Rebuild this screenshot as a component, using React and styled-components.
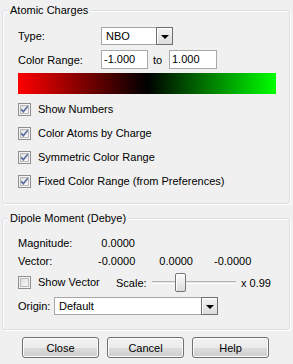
import React from 'react'
import styled, { createGlobalStyle } from 'styled-components'

const GlobalStyle = createGlobalStyle`
    html, body {
        margin: 0;
        padding: 0;
        background: #f0f0f0;
    }
    body {
        font-family: "Liberation Sans", Arial, sans-serif;
        font-size: 11px;
        color: #000;
    }
`

const Dialog = styled.div`
    width: 293px;
    height: 364px;
    box-sizing: border-box;
    padding: 3px 0 0 2px;
    display: flex;
    flex-direction: column;
`

const Group = styled.fieldset`
    margin: ${p => p.$top || 0}px 0 0 0;
    padding: 0;
    min-width: 0;
    width: 288px;
    box-sizing: border-box;
    border: 1px solid #d5dfe5;
    border-radius: 3px;
    box-shadow: inset 1px 1px 0 #fff, 1px 1px 0 #fff;
`

const Legend = styled.legend`
    margin-left: 5px;
    padding: 0 2px;
    line-height: 14px;
    height: 14px;
    background: #f0f0f0;
`

const GroupBody = styled.div`
    display: flex;
    flex-direction: column;
    padding: ${p => p.$top}px 0 ${p => p.$bottom}px 15px;
`

const Row = styled.div`
    display: flex;
    align-items: center;
    height: ${p => p.$h}px;
    margin-top: ${p => p.$mt || 0}px;
`

const Label = styled.span`
    width: ${p => p.$w}px;
    flex: none;
    white-space: nowrap;
`

const Combo = styled.div`
    display: flex;
    width: ${p => p.$w}px;
    height: 18px;
    box-sizing: border-box;
`

const ComboField = styled.div`
    flex: 1;
    background: #fff;
    border: 1px solid #a7a7a7;
    border-right: none;
    padding-left: 4px;
    line-height: 16px;
`

const ComboButton = styled.div`
    width: 17px;
    box-sizing: border-box;
    border: 1px solid #6f6f6f;
    background: linear-gradient(#f3f3f3, #dcdcdc);
    box-shadow: inset 1px 1px 0 #fff;
    display: flex;
    align-items: center;
    justify-content: center;
    &::after {
        content: "";
        border-left: 4px solid transparent;
        border-right: 4px solid transparent;
        border-top: 4px solid #000;
        margin-top: 1px;
    }
`

const TextBox = styled.div`
    width: ${p => p.$w}px;
    height: 19px;
    box-sizing: border-box;
    background: #fff;
    border: 1px solid #a9a9a9;
    padding-left: 2px;
    line-height: 17px;
`

const ToLabel = styled.span`
    width: 21px;
    padding-left: 5px;
    box-sizing: border-box;
`

const ColorBar = styled.div`
    margin-top: 4px;
    width: 258px;
    height: 21px;
    background: linear-gradient(to right, #ff0000 0%, #000 50%, #00ff00 100%);
`

const CheckList = styled.div`
    display: flex;
    flex-direction: column;
    gap: 11px;
    margin-top: 9px;
`

const CheckRow = styled.label`
    display: flex;
    align-items: center;
    height: 13px;
    line-height: 13px;
    width: ${p => (p.$w ? `${p.$w}px` : 'auto')};
    flex: none;
    white-space: nowrap;
`

const CheckText = styled.span`
    margin-left: 7px;
`

const ValueGrid = styled.div`
    display: grid;
    grid-template-columns: 59px 37px 37px 37px;
    column-gap: 21px;
    align-items: center;
    height: 14px;
    line-height: 14px;
    margin-top: ${p => p.$mt || 0}px;
`

const Value = styled.span`
    text-align: right;
    white-space: nowrap;
`

const Slider = styled.div`
    position: relative;
    width: 88px;
    height: 19px;
    flex: none;
`

const Track = styled.div`
    position: absolute;
    left: 2px;
    right: 2px;
    top: 8px;
    height: 3px;
    box-sizing: border-box;
    background: #e6e6e6;
    border-top: 1px solid #b4b4b4;
    border-bottom: 1px solid #fff;
`

const Thumb = styled.div`
    position: absolute;
    top: 0;
    width: 11px;
    height: 19px;
    box-sizing: border-box;
    border: 1px solid #747474;
    border-radius: 2px;
    background: linear-gradient(#fafafa, #dcdcdc);
    box-shadow: inset 1px 1px 0 #fff;
`

const ScaleValue = styled.span`
    margin-left: 3px;
`

const ButtonBar = styled.div`
    display: flex;
    gap: 8px;
    padding-left: 20px;
    margin-top: 7px;
`

const Button = styled.button`
    width: 77px;
    height: 21px;
    padding: 0;
    font-family: inherit;
    font-size: 11px;
    color: #000;
    border: 1px solid #707070;
    border-radius: 3px;
    background: linear-gradient(#f2f2f2 0%, #ebebeb 50%, #dddddd 50%, #cfcfcf 100%);
    box-shadow: inset 0 0 0 1px #fcfcfc;
`

function CheckBox({ checked }) {
    return (
        <svg width="13" height="13" viewBox="0 0 13 13">
            <defs>
                <linearGradient id="cbfill" x1="0" y1="0" x2="1" y2="1">
                    <stop offset="0" stopColor="#dcdcdc" />
                    <stop offset="1" stopColor="#fbfbfb" />
                </linearGradient>
            </defs>
            <rect x="0.5" y="0.5" width="12" height="12" fill="#f4f4f4" stroke="#8f8f8f" />
            <rect x="2.5" y="2.5" width="8" height="8" fill="url(#cbfill)" stroke="#b9b9b9" />
            {checked && (
                <path d="M3.2 6.3 L5.3 8.8 L9.8 3.2" fill="none" stroke="#5a6e9e" strokeWidth="1.6" />
            )}
        </svg>
    )
}

function Check({ label, checked, width }) {
    return (
        <CheckRow $w={width}>
            <CheckBox checked={checked} />
            <CheckText>{label}</CheckText>
        </CheckRow>
    )
}

export default function App() {
    const options = [
        'Show Numbers',
        'Color Atoms by Charge',
        'Symmetric Color Range',
        'Fixed Color Range (from Preferences)',
    ]
    const scale = 0.3

    return (
        <Dialog>
            <GlobalStyle />
            <Group>
                <Legend>Atomic Charges</Legend>
                <GroupBody $top={10} $bottom={15}>
                    <Row $h={18}>
                        <Label $w={83}>Type:</Label>
                        <Combo $w={72}>
                            <ComboField>NBO</ComboField>
                            <ComboButton />
                        </Combo>
                    </Row>
                    <Row $h={19} $mt={5}>
                        <Label $w={83}>Color Range:</Label>
                        <TextBox $w={47}>-1.000</TextBox>
                        <ToLabel>to</ToLabel>
                        <TextBox $w={48}>1.000</TextBox>
                    </Row>
                    <ColorBar />
                    <CheckList>
                        {options.map(opt => (
                            <Check key={opt} label={opt} checked />
                        ))}
                    </CheckList>
                </GroupBody>
            </Group>

            <Group $top={7}>
                <Legend>Dipole Moment (Debye)</Legend>
                <GroupBody $top={11} $bottom={14}>
                    <ValueGrid>
                        <span>Magnitude:</span>
                        <Value>0.0000</Value>
                    </ValueGrid>
                    <ValueGrid $mt={4}>
                        <span>Vector:</span>
                        <Value>-0.0000</Value>
                        <Value>0.0000</Value>
                        <Value>-0.0000</Value>
                    </ValueGrid>
                    <Row $h={19} $mt={5}>
                        <Check label="Show Vector" width={98} />
                        <Label $w={34}>Scale:</Label>
                        <Slider>
                            <Track />
                            <Thumb style={{ left: Math.round(scale * 88) - 1 }} />
                        </Slider>
                        <ScaleValue>x 0.99</ScaleValue>
                    </Row>
                    <Row $h={18} $mt={5}>
                        <Label $w={36}>Origin:</Label>
                        <Combo $w={164}>
                            <ComboField>Default</ComboField>
                            <ComboButton />
                        </Combo>
                    </Row>
                </GroupBody>
            </Group>

            <ButtonBar>
                <Button>Close</Button>
                <Button>Cancel</Button>
                <Button>Help</Button>
            </ButtonBar>
        </Dialog>
    )
}
